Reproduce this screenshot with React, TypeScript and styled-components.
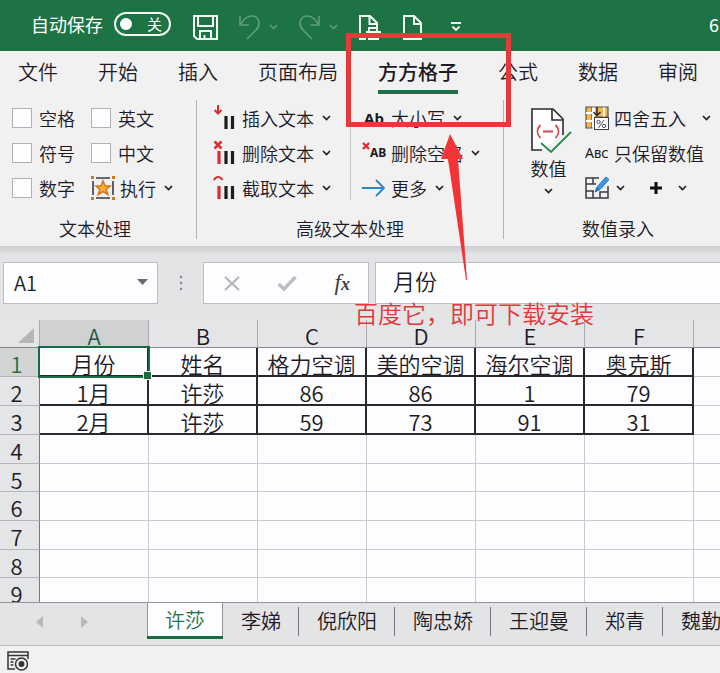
import React from 'react';
import styled, { createGlobalStyle, css } from 'styled-components';

const GlobalStyle = createGlobalStyle`
  *, *::before, *::after { box-sizing: border-box; }
  body {
    margin: 0;
    background: #e4e5e7;
    color: #1d1a26;
    font-family: "Noto Sans CJK SC", "Noto Sans", sans-serif;
    font-weight: 350;
  }
  button, input {
    font: inherit;
    color: inherit;
    background: none;
    border: 0;
    padding: 0;
    margin: 0;
  }
  button { cursor: pointer; }
`;

const Window = styled.div`
  position: relative;
  display: flex;
  flex-direction: column;
  height: 100vh;
  overflow: hidden;
`;

/* ---------- title bar ---------- */

const TitleBar = styled.header`
  flex: none;
  display: flex;
  align-items: center;
  height: 51px;
  padding: 0 1px 0 31px;
  background: #1e7344;
  color: #fff;
  font-size: 18px;
  font-weight: 400;
  line-height: 24px;
`;

const AutoSave = styled.label`
  display: flex;
  align-items: center;
  gap: 11px;
  padding-bottom: 3px;
`;

const Switch = styled.button`
  display: flex;
  align-items: center;
  justify-content: space-between;
  width: 57px;
  height: 24px;
  padding: 0 7px 0 4px;
  border: 2px solid #f3fbf6;
  border-radius: 12px;
  color: #fff;
  font-size: 15px;
  line-height: 20px;
  &::before {
    content: "";
    width: 12px;
    height: 12px;
    border-radius: 50%;
    background: #fff;
  }
`;

const QuickAccess = styled.div`
  display: flex;
  align-items: center;
  margin-left: 22px;
  gap: 21px;
  padding-top: 3px;
`;

const QuickButton = styled.button<{ $dim?: boolean }>`
  display: flex;
  align-items: center;
  gap: 9px;
  color: ${(p) => (p.$dim ? '#5d9c79' : '#f4faf6')};
  &:last-child { margin-left: 7px; }
`;

const DocumentName = styled.span`
  margin-left: auto;
  padding-bottom: 3px;
  font-size: 18px;
`;

/* ---------- ribbon ---------- */

const TabRow = styled.nav`
  flex: none;
  display: flex;
  gap: 40px;
  height: 44px;
  padding: 7px 0 0 18px;
  background: #f1f1f2;
  overflow: hidden;
`;

const RibbonTab = styled.button<{ $active?: boolean }>`
  flex: none;
  height: 36px;
  padding-bottom: 4px;
  font-size: 20px;
  line-height: 28px;
  border-bottom: 4px solid transparent;
  ${(p) =>
    p.$active &&
    css`
      font-weight: 500;
      border-bottom-color: #1e6f48;
    `}
`;

const Ribbon = styled.section`
  flex: none;
  display: flex;
  height: 151px;
  padding: 5px 0 7px;
  background: #f1f1f2;
  overflow: hidden;
  font-size: 18px;
  line-height: 24px;
`;

const Group = styled.div<{ $grow?: boolean }>`
  flex: ${(p) => (p.$grow ? '1 0 auto' : 'none')};
  display: flex;
  flex-direction: column;
  justify-content: space-between;
  & + & {
    border-left: 1px solid #b5b5b8;
  }
`;

const GroupBody = styled.div<{ $left: number }>`
  display: flex;
  padding-left: ${(p) => p.$left}px;
`;

const GroupLabel = styled.div<{ $left?: number; $right?: number }>`
  padding: 0 ${(p) => p.$right ?? 0}px 0 ${(p) => p.$left ?? 0}px;
  text-align: center;
  line-height: 22px;
`;

const Stack = styled.div<{ $width?: number }>`
  flex: none;
  width: ${(p) => (p.$width ? `${p.$width}px` : 'auto')};
  display: grid;
  grid-auto-rows: 35px;
  align-items: center;
  align-content: start;
`;

const Divided = styled(Stack)`
  height: 100px;
  padding-left: 11px;
  border-left: 1px solid #c6c6c9;
`;

const Check = styled.label`
  display: flex;
  align-items: center;
  gap: 7px;
  input {
    appearance: none;
    width: 20px;
    height: 20px;
    background: #fdfdff;
    border: 1px solid #b0b0b5;
  }
`;

const Command = styled.button<{ $gap?: number }>`
  display: flex;
  align-items: center;
  gap: ${(p) => p.$gap ?? 5}px;
  white-space: nowrap;
  > svg { flex: none; }
`;

const CommandText = styled.span`
  margin-right: 3px;
`;

const CommandRow = styled.div<{ $gap: number }>`
  display: flex;
  align-items: center;
  gap: ${(p) => p.$gap}px;
`;

const BigCommand = styled.button`
  display: flex;
  flex-direction: column;
  align-items: center;
  width: 37px;
  margin: 7px 18px 0 0;
  gap: 3px;
  svg:first-child { align-self: flex-start; }
  span { margin-bottom: 5px; }
`;

const IconLetters = styled.span`
  width: 24px;
  font: 400 14px "Noto Sans", sans-serif;
  font-variant: small-caps;
  text-align: left;
`;

/* ---------- formula bar ---------- */

const FormulaBar = styled.section`
  flex: none;
  display: flex;
  align-items: flex-start;
  height: 74px;
  padding: 16px 0 0 3px;
  background: linear-gradient(#cccdcf, #e2e3e5 8px, #e4e5e7);
`;

const Box = styled.div<{ $width?: number }>`
  display: flex;
  align-items: center;
  height: 42px;
  background: #fcfdff;
  border: 1px solid #bcbdc0;
  ${(p) => (p.$width ? `flex: none; width: ${p.$width}px;` : 'flex: 1; border-right: 0;')}
  > input {
    flex: 1;
    min-width: 0;
    outline: 0;
  }
`;

const NameBox = styled(Box)`
  padding: 0 9px 2px 10px;
  font-size: 20px;
`;

const FormulaBox = styled(Box)`
  margin-left: 6px;
  padding: 0 0 6px 17px;
  font-size: 22px;
`;

const FormulaTools = styled(Box)`
  justify-content: space-between;
  padding: 0 18px 0 20px;
  button { display: flex; }
`;

const Grip = styled.div`
  flex: none;
  width: 45px;
  height: 42px;
  display: flex;
  justify-content: center;
  align-items: center;
`;

/* ---------- sheet ---------- */

const SheetArea = styled.main`
  flex: 1;
  min-height: 0;
  overflow: hidden;
  background: #fdfdff;
`;

const Sheet = styled.table`
  width: 100%;
  table-layout: fixed;
  border-collapse: separate;
  border-spacing: 0;
  font-size: 22px;
  line-height: 24px;
  text-align: center;
  th, td {
    padding: 2px 0 0;
    height: 29px;
    white-space: nowrap;
  }
  tbody tr:nth-child(3n + 5) > * { height: 28px; }
`;

const RowHeadCol = styled.col`
  width: 40px;
`;

const DataCol = styled.col`
  width: 109px;
`;

const ColHead = styled.th<{ $active?: boolean }>`
  && {
    height: 28px;
    padding-top: 3px;
  }
  font-weight: 350;
  background: ${(p) => (p.$active ? '#d0d1d2' : '#e4e5e7')};
  color: ${(p) => (p.$active ? '#22593f' : '#1d1a26')};
  border-right: 1px solid #a9aaad;
  border-bottom: 1px solid #87888b;
  &:last-child { border-right: 0; }
`;

const Corner = styled(ColHead)`
  text-align: right;
  svg { display: block; margin: 0 5px 0 auto; }
`;

const RowHead = styled.th<{ $active?: boolean }>`
  font-weight: 350;
  background: ${(p) => (p.$active ? '#d3d5d5' : '#e4e5e7')};
  color: ${(p) => (p.$active ? '#1e7344' : '#1d1a26')};
  border-right: 1px solid #77787b;
  border-bottom: 1px solid #b4b5b8;
  && { padding-right: 6px; }
`;

const Cell = styled.td<{ $filled?: boolean; $selected?: boolean }>`
  border-right: 1px solid #c9cacd;
  border-bottom: 1px solid #c9cacd;
  &:last-child { border-right: 0; }
  ${(p) =>
    p.$filled &&
    css`
      border-right: 2px solid #2a2830;
      border-bottom: 2px solid #2a2830;
    `}
  ${(p) => p.$selected && 'position: relative;'}
`;

const Selection = styled.span`
  position: absolute;
  inset: -2px -3px -3px -2px;
  border: 2px solid #1b6b42;
  &::after {
    content: "";
    position: absolute;
    right: -4px;
    bottom: -4px;
    width: 9px;
    height: 9px;
    background: #1b6b42;
    border: 1px solid #fdfdff;
  }
`;

/* ---------- sheet tabs and status ---------- */

const TabStrip = styled.footer`
  flex: none;
  display: flex;
  align-items: flex-start;
  height: 43px;
  background: #e3e4e6;
  border-top: 1px solid #939497;
  overflow: hidden;
`;

const TabArrows = styled.div`
  flex: none;
  display: flex;
  gap: 36px;
  width: 147px;
  padding: 13px 0 0 36px;
  button { display: flex; }
`;

const SheetTab = styled.button<{ $active?: boolean }>`
  flex: none;
  height: 36px;
  padding: 0 18px;
  font-size: 20px;
  line-height: 34px;
  background: linear-gradient(#77787b, #77787b) right center / 1px 29px no-repeat;
  ${(p) =>
    p.$active &&
    css`
      margin-top: -1px;
      height: 37px;
      line-height: 36px;
      color: #1e7048;
      background: #fdfdff;
      border-bottom: 3px solid #1b6b42;
      box-shadow: inset -1px 0 #939497, inset 1px 0 #939497;
    `}
`;

const StatusBar = styled.div`
  flex: none;
  display: flex;
  align-items: center;
  height: 28px;
  padding: 2px 0 0 7px;
  background: #f0f1f1;
  border-top: 1px solid #bcbdbf;
`;

/* ---------- annotation ---------- */

const Highlight = styled.div`
  position: absolute;
  left: 346px;
  top: 33px;
  width: 165px;
  height: 94px;
  border: 5px solid #e8393a;
  pointer-events: none;
`;

const ArrowMark = styled.svg`
  position: absolute;
  left: 441px;
  top: 134px;
  pointer-events: none;
`;

const Note = styled.div`
  position: absolute;
  left: 354px;
  top: 296px;
  font-size: 24px;
  line-height: 34px;
  color: #e0393b;
  white-space: nowrap;
  pointer-events: none;
`;

/* ---------- icons ---------- */

const Chevron = ({ color = 'currentColor' }: { color?: string }) => (
  <svg width="9" height="6" viewBox="0 0 9 6" fill="none" stroke={color} strokeWidth="1.6">
    <path d="M1 1l3.5 3.5L8 1" />
  </svg>
);

const SaveIcon = () => (
  <svg width="25" height="25" viewBox="0 0 25 25" fill="none" stroke="currentColor" strokeWidth="2">
    <path d="M1 1h23v23H4l-3-3z" />
    <path d="M5 1v10h15V1" />
    <path d="M7 24v-8h11v8M11.5 24v-4" />
  </svg>
);

const UndoIcon = () => (
  <svg width="21" height="25" viewBox="0 0 21 25" fill="none" stroke="currentColor" strokeWidth="1.7">
    <path d="M1 1v9h9" />
    <path d="M1.5 9.5C5 3 9 1 13 1c4 0 7 3 7 7 0 3-1 5-3 7L8 24" />
  </svg>
);

const RedoIcon = () => (
  <svg width="21" height="25" viewBox="0 0 21 25" fill="none" stroke="currentColor" strokeWidth="1.7">
    <path d="M20 1v9h-9" />
    <path d="M19.500 9.500C16 3 12 1 8 1 4 1 1 4 1 8c0 3 1 5 3 7l9 9" />
  </svg>
);

const PrintPreviewIcon = () => (
  <svg width="23" height="25" viewBox="0 0 23 25" fill="none" stroke="currentColor" strokeWidth="2">
    <path d="M7 24H1V1h10l7 7v4" />
    <path d="M10.500 1v8H18" />
    <path d="M10 17v-4h8v4M8 22v-5h13v5zM10 22v2h9v-2" />
  </svg>
);

const PageIcon = () => (
  <svg width="19" height="25" viewBox="0 0 19 25" fill="none" stroke="currentColor" strokeWidth="2">
    <path d="M1 1h10l7 7v16H1z" />
    <path d="M11 1v8h7" />
  </svg>
);

const CustomizeIcon = () => (
  <svg width="12" height="10" viewBox="0 0 12 10" fill="none" stroke="currentColor" strokeWidth="1.8">
    <path d="M1 1h10M2.500 4.500L6 8l3.500-3.500" />
  </svg>
);

const StarFrameIcon = () => (
  <svg width="24" height="24" viewBox="0 0 24 24">
    <path d="M5 2h14M5 22h14M2 5v14M22 5v14" stroke="#3c3a42" strokeWidth="1.6" />
    <g fill="#cf7a1c">
      <rect x="0" y="0" width="3" height="3" />
      <rect x="21" y="0" width="3" height="3" />
      <rect x="0" y="21" width="3" height="3" />
      <rect x="21" y="21" width="3" height="3" />
    </g>
    <path
      d="M12 5l2.100 5h5l-4 3.300 1.700 5.200L12 15.500l-4.800 3 1.700-5.200-4-3.300h5z"
      fill="#fdb43c"
      stroke="#dc7618"
      strokeWidth="1.500"
    />
  </svg>
);

const BarsIcon = ({ kind }: { kind: 'insert' | 'delete' | 'extract' }) => (
  <svg width="24" height="25" viewBox="0 0 24 25" fill="none">
    <path d="M13 11v13M19.500 11v13" stroke="#1d1b20" strokeWidth="3.200" />
    {kind === 'insert' && <path d="M5 0v8M1.500 5L5 8.500 8.500 5" stroke="#e02b35" strokeWidth="2" />}
    {kind === 'delete' && (
      <path d="M1.500 1.500l7 7M8.500 1.500l-7 7" stroke="#e02b35" strokeWidth="2.600" />
    )}
    {kind === 'extract' && <path d="M1 5c2-4 6-4 8.500 0" stroke="#e02b35" strokeWidth="2.200" />}
    {kind !== 'insert' && <path d="M6 11v13" stroke="#e02b35" strokeWidth="3.200" />}
  </svg>
);

const CaseLetters = styled.span`
  width: 24px;
  font: 700 15px "Noto Sans", sans-serif;
  color: #1d1b20;
  text-align: center;
`;

const RemoveSpace = styled.span`
  display: flex;
  align-items: flex-end;
  width: 24px;
  font: 700 12px/22px "Noto Sans", sans-serif;
  color: #1d1b20;
  svg { flex: none; align-self: flex-start; }
`;

const SmallCross = () => (
  <svg width="8" height="9" viewBox="0 0 8 9" stroke="#e02b35" strokeWidth="2.400">
    <path d="M1 1l6 6M7 1L1 7" />
  </svg>
);

const ArrowIcon = () => (
  <svg width="24" height="18" viewBox="0 0 24 18" fill="none" stroke="#2a86d1" strokeWidth="1.800">
    <path d="M0 9h22M14 1l8 8-8 8" />
  </svg>
);

const ValueIcon = () => (
  <svg width="42" height="46" viewBox="0 0 42 46" fill="none">
    <path d="M12 43H2V2h21l10 10v16" fill="#fff" stroke="#2b2833" strokeWidth="1.600" />
    <path d="M22 2v11h11" stroke="#2b2833" strokeWidth="1.600" />
    <path d="M10.500 18c-4 4-4 9 0 13M25.500 18c4 4 4 9 0 13M13 24.500h10" stroke="#d8434b" strokeWidth="1.800" />
    <path d="M11 36l10 9 20-20" stroke="#2c8a4b" strokeWidth="1.800" />
  </svg>
);

const RoundIcon = () => (
  <svg width="24" height="24" viewBox="0 0 24 24" fill="none">
    <path d="M1 1h6v21H1zM7 1h16v10H7z" fill="#f7b64e" stroke="#55504d" strokeWidth="1.200" />
    <path d="M1 7h6M1 15h6" stroke="#fff" strokeWidth="2" />
    <path d="M7 1.500h3v20H7zM18 1.500h2v9h-2z" fill="#fff" />
    <path d="M12 1v8M8.500 6L12 9.500 15.500 6" stroke="#2b2833" strokeWidth="1.500" />
    <rect x="9.500" y="11.500" width="14" height="12" fill="#fff" stroke="#3c3a42" />
    <circle cx="13.500" cy="16" r="1.700" stroke="#55505a" />
    <circle cx="19" cy="20" r="1.700" stroke="#55505a" />
    <path d="M19 14l-5.500 8" stroke="#55505a" />
  </svg>
);

const TableEditIcon = () => (
  <svg width="24" height="24" viewBox="0 0 24 24" fill="none">
    <path d="M14 2H1v20h22V10M1 8h10M1 15h8M8 2v6M15 22v-6h8M8 15v7" stroke="#3c3a42" strokeWidth="1.500" />
    <path d="M10 16l2-5L21 1l3 2.500-9 10z" fill="#3f97dd" stroke="#2676bf" />
    <path d="M10 16l2-5 3 2.500z" fill="#2676bf" />
  </svg>
);

const PlusIcon = () => (
  <svg width="14" height="14" viewBox="0 0 14 14" stroke="#121116" strokeWidth="3">
    <path d="M7 1v12M1 7h12" />
  </svg>
);

const DropIcon = () => (
  <svg width="11" height="6" viewBox="0 0 11 6" fill="#6a6b70">
    <path d="M0 0h11L5.500 6z" />
  </svg>
);

const GripIcon = () => (
  <svg width="4" height="16" viewBox="0 0 4 16" fill="#85868b">
    <circle cx="2" cy="2" r="1.200" />
    <circle cx="2" cy="8" r="1.200" />
    <circle cx="2" cy="14" r="1.200" />
  </svg>
);

const CancelIcon = () => (
  <svg width="16" height="15" viewBox="0 0 16 15" stroke="#b3b4b8" strokeWidth="2">
    <path d="M1 1l14 13M15 1L1 14" />
  </svg>
);

const AcceptIcon = () => (
  <svg width="20" height="17" viewBox="0 0 20 17" fill="none" stroke="#bdbec1" strokeWidth="3.500">
    <path d="M1.500 9l5.500 5L18.500 2" />
  </svg>
);

const FxLabel = styled.span`
  font: italic 400 23px "Liberation Serif", serif;
  color: #3f3f45;
  small {
    font-size: 18px;
    font-weight: 700;
  }
`;

const StatusIcon = () => (
  <svg width="22" height="20" viewBox="0 0 22 20" fill="none" stroke="#35343a" strokeWidth="1.500">
    <path d="M8 18H1V1h20v7M1 4.500h20" />
    <path d="M3.500 8h5M3.500 11h3M3.500 14h3" />
    <circle cx="14.500" cy="13" r="6" />
    <circle cx="14.500" cy="13" r="2.200" fill="#35343a" />
  </svg>
);

/* ---------- data ---------- */

const ribbonTabs = ['文件', '开始', '插入', '页面布局', '方方格子', '公式', '数据', '审阅'];
const columns = ['A', 'B', 'C', 'D', 'E', 'F'];
const rows = [
  ['月份', '姓名', '格力空调', '美的空调', '海尔空调', '奥克斯'],
  ['1月', '许莎', '86', '86', '1', '79'],
  ['2月', '许莎', '59', '73', '91', '31'],
  [], [], [], [], [], [],
];
const sheets = ['许莎', '李娣', '倪欣阳', '陶忠娇', '王迎曼', '郑青', '魏勤'];

const CheckItem = ({ text }: { text: string }) => (
  <Check>
    <input type="checkbox" />
    {text}
  </Check>
);

const MenuCommand = ({ icon, text }: { icon: React.ReactNode; text: string }) => (
  <Command>
    {icon}
    <CommandText>{text}</CommandText>
    <Chevron />
  </Command>
);

export default function App() {
  return (
    <Window>
      <GlobalStyle />
      <TitleBar>
        <AutoSave>
          自动保存
          <Switch role="switch" aria-checked={false}>关</Switch>
        </AutoSave>
        <QuickAccess>
          <QuickButton aria-label="保存"><SaveIcon /></QuickButton>
          <QuickButton $dim aria-label="撤消"><UndoIcon /><Chevron /></QuickButton>
          <QuickButton $dim aria-label="恢复"><RedoIcon /><Chevron /></QuickButton>
          <QuickButton aria-label="打印预览"><PrintPreviewIcon /></QuickButton>
          <QuickButton aria-label="新建"><PageIcon /></QuickButton>
          <QuickButton aria-label="自定义快速访问工具栏"><CustomizeIcon /></QuickButton>
        </QuickAccess>
        <DocumentName>6</DocumentName>
      </TitleBar>

      <TabRow>
        {ribbonTabs.map((name) => (
          <RibbonTab key={name} $active={name === '方方格子'}>{name}</RibbonTab>
        ))}
      </TabRow>

      <Ribbon>
        <Group>
          <GroupBody $left={12}>
            <Stack $width={79}>
              <CheckItem text="空格" />
              <CheckItem text="符号" />
              <CheckItem text="数字" />
            </Stack>
            <Stack $width={105}>
              <CheckItem text="英文" />
              <CheckItem text="中文" />
              <MenuCommand icon={<StarFrameIcon />} text="执行" />
            </Stack>
          </GroupBody>
          <GroupLabel $right={6}>文本处理</GroupLabel>
        </Group>

        <Group>
          <GroupBody $left={16}>
            <Stack $width={137}>
              <MenuCommand icon={<BarsIcon kind="insert" />} text="插入文本" />
              <MenuCommand icon={<BarsIcon kind="delete" />} text="删除文本" />
              <MenuCommand icon={<BarsIcon kind="extract" />} text="截取文本" />
            </Stack>
            <Divided $width={153}>
              <MenuCommand icon={<CaseLetters>Ab</CaseLetters>} text="大小写" />
              <MenuCommand icon={<RemoveSpace><SmallCross />AB</RemoveSpace>} text="删除空格" />
              <MenuCommand icon={<ArrowIcon />} text="更多" />
            </Divided>
          </GroupBody>
          <GroupLabel>高级文本处理</GroupLabel>
        </Group>

        <Group $grow>
          <GroupBody $left={26}>
            <BigCommand>
              <ValueIcon />
              <span>数值</span>
              <Chevron />
            </BigCommand>
            <Stack>
              <CommandRow $gap={16}>
                <Command><RoundIcon />四舍五入</Command>
                <Command aria-label="四舍五入选项"><Chevron /></Command>
              </CommandRow>
              <Command><IconLetters>Abc</IconLetters>只保留数值</Command>
              <CommandRow $gap={24}>
                <Command aria-label="表格编辑" $gap={7}><TableEditIcon /><Chevron /></Command>
                <Command aria-label="加" $gap={15}><PlusIcon /><Chevron /></Command>
              </CommandRow>
            </Stack>
          </GroupBody>
          <GroupLabel $left={12}>数值录入</GroupLabel>
        </Group>
      </Ribbon>

      <FormulaBar>
        <NameBox $width={155}>
          <input aria-label="名称框" defaultValue="A1" />
          <DropIcon />
        </NameBox>
        <Grip><GripIcon /></Grip>
        <FormulaTools $width={166}>
          <button aria-label="取消"><CancelIcon /></button>
          <button aria-label="输入"><AcceptIcon /></button>
          <button aria-label="插入函数"><FxLabel>f<small>x</small></FxLabel></button>
        </FormulaTools>
        <FormulaBox>
          <input aria-label="编辑栏" defaultValue="月份" />
        </FormulaBox>
      </FormulaBar>

      <SheetArea>
        <Sheet>
          <colgroup>
            <RowHeadCol />
            {columns.map((c) => <DataCol key={c} />)}
            <col />
          </colgroup>
          <thead>
            <tr>
              <Corner aria-label="全选">
                <svg width="16" height="15" viewBox="0 0 16 15" fill="#b4b5b7"><path d="M16 0v15H0z" /></svg>
              </Corner>
              {columns.map((c) => <ColHead key={c} $active={c === 'A'}>{c}</ColHead>)}
              <ColHead />
            </tr>
          </thead>
          <tbody>
            {rows.map((row, r) => (
              <tr key={r}>
                <RowHead $active={r === 0}>{r + 1}</RowHead>
                {columns.map((c, i) => (
                  <Cell key={c} $filled={row.length > 0} $selected={r === 0 && i === 0}>
                    {row[i]}
                    {r === 0 && i === 0 && <Selection />}
                  </Cell>
                ))}
                <Cell />
              </tr>
            ))}
          </tbody>
        </Sheet>
      </SheetArea>

      <TabStrip>
        <TabArrows>
          <button aria-label="上一个工作表">
            <svg width="8" height="12" viewBox="0 0 8 12" fill="#b7b8ba"><path d="M7 0v12L0 6z" /></svg>
          </button>
          <button aria-label="下一个工作表">
            <svg width="8" height="12" viewBox="0 0 8 12" fill="#b7b8ba"><path d="M1 0v12l7-6z" /></svg>
          </button>
        </TabArrows>
        {sheets.map((name, i) => (
          <SheetTab key={name} $active={i === 0}>{name}</SheetTab>
        ))}
      </TabStrip>

      <StatusBar><StatusIcon /></StatusBar>

      <Highlight />
      <ArrowMark width="27" height="147" viewBox="0 0 27 147" fill="#f23437">
        <path d="M9 0L22 25l-5 0L26 146h-1L7 25H0z" />
      </ArrowMark>
      <Note>百度它，即可下载安装</Note>
    </Window>
  );
}
